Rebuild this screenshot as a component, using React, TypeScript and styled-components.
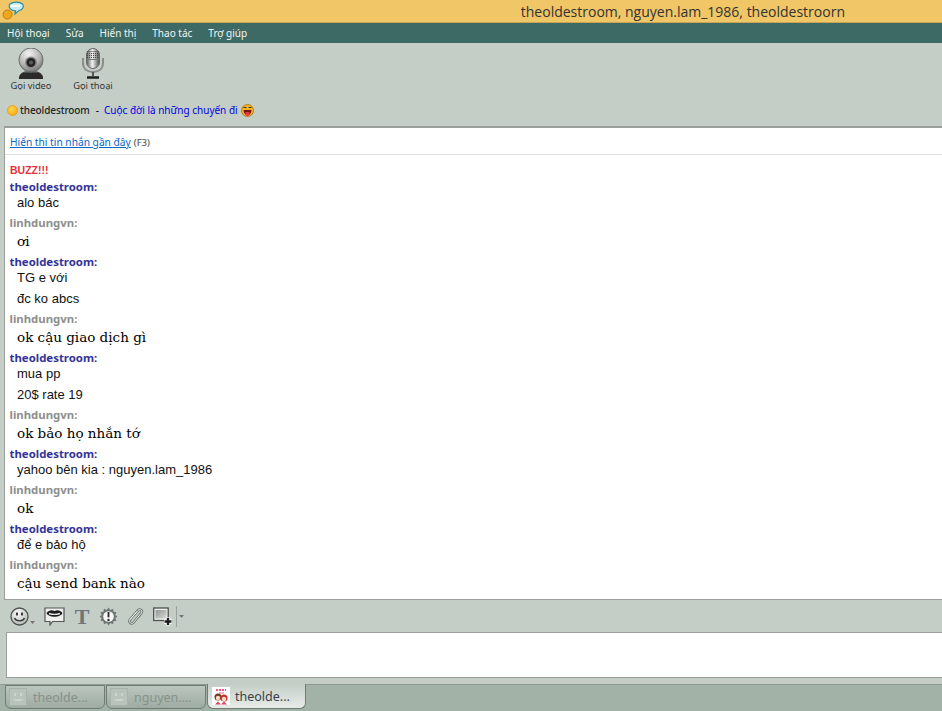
import React from "react";
import styled, { createGlobalStyle } from "styled-components";

const Global = createGlobalStyle`
  html, body { margin: 0; padding: 0; width: 942px; height: 711px; overflow: hidden; background: #c4cec7; }
  * { box-sizing: border-box; }
`;
const Page = styled.div`width:942px;height:711px;display:flex;flex-direction:column;background:#c4cec7;overflow:hidden;font-family:"Liberation Sans",sans-serif;`;
const TitleBar = styled.div`height:23px;flex:none;background:#f0c666;border-bottom:1px solid #c9a558;display:flex;align-items:center;justify-content:space-between;padding:0 97px 0 2px;`;
const TitleText = styled.div`font:14px "Open Sans",sans-serif;color:#333;white-space:nowrap;`;
const MenuBar = styled.div`height:20px;flex:none;background:#3e6a66;display:flex;align-items:center;gap:16px;padding-left:7px;`;
const MenuItem = styled.span`font:10px "Noto Sans",sans-serif;color:#f2f5f4;`;
const TopTools = styled.div`height:49px;flex:none;display:flex;padding:5px 0 0 11px;gap:22px;`;
const CallButton = styled.div`width:40px;display:flex;flex-direction:column;align-items:center;font:9.3px/14px "Noto Sans",sans-serif;color:#333;white-space:nowrap;`;
const StatusRow = styled.div`height:34px;flex:none;display:flex;align-items:center;padding:2px 0 0 7px;font:10px "Noto Sans",sans-serif;`;
const Contact = styled.span`margin:0 6px 0 2px;color:#222;font-weight:500;letter-spacing:-.1px;`;
const Mood = styled.span`color:#0000e0;margin:0 3px 0 5px;`;
const ChatPanel = styled.div`height:474px;flex:none;margin-left:4px;background:#fff;border-top:2px solid #9a9f9c;border-left:1px solid #9a9f9c;border-bottom:1px solid #9a9f9c;overflow:hidden;`;
const HistoryRow = styled.div`height:27px;border-bottom:1px solid #dedede;display:flex;align-items:center;padding:2px 0 0 5px;font:9.6px "Noto Sans",sans-serif;color:#444;gap:3px;`;
const HistoryLink = styled.a`color:#0a66c2;text-decoration:underline;font-size:10.2px;`;
const Log = styled.div`padding:8px 0 0 4.500px;display:flex;flex-direction:column;`;
const Buzz = styled.div`font:bold 10.5px/14px "Liberation Sans",sans-serif;color:#e8303a;height:14px;margin-left:.5px;`;
const Name = styled.div<{ $me?: boolean; $gap: number }>`font:bold 11.4px/14px "Noto Sans",sans-serif;height:14px;margin-top:${p => p.$gap}px;color:${p => (p.$me ? "#333399" : "#8e8e8e")};`;
const Plain = styled.div<{ $gap?: number }>`font:13px/18px "Liberation Sans",sans-serif;height:16px;color:#111;margin:${p => p.$gap ?? 0}px 0 0 7.500px;`;
const Rich = styled.div`font:13.5px/22px "DejaVu Serif",serif;height:20px;color:#000;margin-left:7.500px;`;
const EditTools = styled.div`height:32px;flex:none;display:flex;align-items:center;gap:9px;padding:1px 0 0 10px;`;
const Input = styled.div`height:46px;flex:none;margin-left:6px;background:#fff;border:1px solid #9a9f9c;border-right:none;`;
const TabBar = styled.div`flex:1;margin-top:6px;display:flex;align-items:flex-start;background:#a2b2a7;border-top:1px solid #8d9a91;padding-left:5px;`;
const Tab = styled.div<{ $active?: boolean }>`width:${p => (p.$active ? 99 : 100)}px;height:${p => (p.$active ? 25 : 24)}px;margin-right:${p => (p.$active ? 0 : 1)}px;margin-top:${p => (p.$active ? -1 : 0)}px;border:1px solid #6f7c74;border-top:${p => (p.$active ? "none" : "1px solid #6f7c74")};border-radius:0 0 6px 6px;background:${p => (p.$active ? "linear-gradient(#c4cec7,#e8ece9)" : "linear-gradient(#bac6be,#9eaba2)")};display:flex;align-items:center;gap:${p => (p.$active ? 5 : 6)}px;padding-left:${p => (p.$active ? 4 : 3)}px;font:12.500px "Noto Sans",sans-serif;color:${p => (p.$active ? "#3a3f4a" : "#87918b")};`;

const ToolSvg = styled.svg`display:block;flex:none;`;

const Logo = () => (
  <ToolSvg width="22" height="20" viewBox="0 0 22 20">
    <circle cx="5.500" cy="13.500" r="4.500" fill="#f0a818" stroke="#c2761a" />
    <path d="M8 3C11 .5 18 .5 20.500 3c2 2.500 0 6-3.500 6.500L13 13l.5-3.200C9 9.500 5.500 6.500 8 3z" fill="#c7eef2" stroke="#2f8da2" strokeWidth="1.200" />
    <path d="M9 5h9" stroke="#fff" strokeWidth="2" />
  </ToolSvg>
);
const Webcam = () => (
  <ToolSvg width="26" height="31" viewBox="0 0 26 31">
    <defs>
      <radialGradient id="cam" cx=".4" cy=".25" r=".85"><stop offset="0" stopColor="#f2f2f2" /><stop offset=".6" stopColor="#b0b0b0" /><stop offset="1" stopColor="#5e5e5e" /></radialGradient>
    </defs>
    <path d="M1 29c1-4 5-6 12-6s11 2 12 6v2H1z" fill="#2b2b2b" />
    <path d="M6 24h14" stroke="#777" strokeWidth="1" />
    <circle cx="13" cy="12" r="12" fill="url(#cam)" stroke="#6c6c6c" />
    <circle cx="13" cy="14.500" r="6" fill="#8a8a8a" />
    <circle cx="13" cy="14.500" r="4.500" fill="#242424" />
    <circle cx="13" cy="14.500" r="2" fill="#5b5b5b" />
  </ToolSvg>
);
const Mic = () => (
  <ToolSvg width="24" height="31" viewBox="0 0 24 31">
    <defs>
      <linearGradient id="mic" x1="0" x2="1"><stop offset="0" stopColor="#5a5a5a" /><stop offset=".45" stopColor="#f2f2f2" /><stop offset="1" stopColor="#4c4c4c" /></linearGradient>
    </defs>
    <path d="M2 10v5c0 6 4.500 9 10 9s10-3 10-9v-5" fill="none" stroke="#8c8c8c" strokeWidth="2" />
    <rect x="5.500" y=".5" width="13" height="20" rx="6.500" fill="url(#mic)" stroke="#666" />
    <path d="M6.500 3.500h11M6 5.500h12M6 7.500h12M6 9.500h12" stroke="#444" strokeWidth="1" strokeDasharray="1 1" />
    <path d="M5.500 11.500h13" stroke="#777" />
    <path d="M12 24v4" stroke="#555" strokeWidth="2" />
    <path d="M6 29.500h12" stroke="#1c1c1c" strokeWidth="2.500" />
  </ToolSvg>
);
const Dot = () => (
  <ToolSvg width="11" height="11" viewBox="0 0 11 11">
    <defs><radialGradient id="dot" cx=".4" cy=".35" r=".7"><stop offset="0" stopColor="#ffd84d" /><stop offset="1" stopColor="#f8a70c" /></radialGradient></defs>
    <circle cx="5.500" cy="5.500" r="5" fill="url(#dot)" stroke="#e6a030" />
  </ToolSvg>
);
const Tongue = () => (
  <ToolSvg width="13" height="13" viewBox="0 0 13 13">
    <circle cx="6.500" cy="6.500" r="6" fill="#f7b421" stroke="#a86a10" strokeWidth=".8" />
    <path d="M2.500 3.500h3M7.500 3.500h3" stroke="#333" />
    <path d="M2.500 6h8c0 3-2 5-4 5s-4-2-4-5z" fill="#7c1010" />
    <path d="M4.500 8h4v2a2 2 0 01-4 0z" fill="#e8364a" />
  </ToolSvg>
);
const Smile = () => (
  <ToolSvg width="19" height="19" viewBox="0 0 19 19">
    <defs><radialGradient id="sm" cx=".4" cy=".3" r=".8"><stop offset="0" stopColor="#fafafa" /><stop offset="1" stopColor="#aeb3b0" /></radialGradient></defs>
    <circle cx="9.500" cy="9.500" r="8.500" fill="url(#sm)" stroke="#4e5250" strokeWidth="1.300" />
    <ellipse cx="7" cy="7" rx="1.100" ry="1.800" fill="#333" />
    <ellipse cx="12" cy="7" rx="1.100" ry="1.800" fill="#333" />
    <path d="M4.500 11c1.500 3.800 8.500 3.800 10 0" fill="none" stroke="#333" strokeWidth="1.300" />
  </ToolSvg>
);
const Caret = () => (
  <ToolSvg width="5" height="3" viewBox="0 0 5 3"><path d="M0 0h5L2.500 3z" fill="#777" /></ToolSvg>
);
const Lips = () => (
  <ToolSvg width="21" height="19" viewBox="0 0 21 19">
    <path d="M1 1h19v13.500H8.500L6 18v-3.500H1z" fill="#eef0ee" stroke="#555" strokeWidth="1.200" />
    <path d="M2.500 6C5 2.800 8 2.800 10.500 4 13 2.800 16 2.800 18.500 6c-2 5-14 5-16 0z" fill="#1c1c1c" />
    <path d="M5 6.500c3 1 8 1 11 0" stroke="#e8e8e8" strokeWidth="1.400" fill="none" />
  </ToolSvg>
);
const Gear = () => (
  <ToolSvg width="19" height="19" viewBox="0 0 19 19">
    <path d="M9.500 .5l1.800 2.500 2.800-1.200.4 3 3 .4-1.200 2.800L18.500 9.500l-2.200 1.500 1.200 2.800-3 .4-.4 3-2.800-1.200-1.800 2.500-1.800-2.500-2.800 1.200-.4-3-3-.4 1.200-2.800L.5 9.500l2.200-1.500-1.200-2.800 3-.4.4-3 2.800 1.200z" fill="#6f7673" />
    <circle cx="9.500" cy="9.500" r="5.300" fill="#f6f7f6" />
    <path d="M9.500 5v5.300" stroke="#2c2c2c" strokeWidth="1.900" />
    <circle cx="9.500" cy="12.900" r="1.200" fill="#2c2c2c" />
  </ToolSvg>
);
const Clip = () => (
  <ToolSvg width="17" height="19" viewBox="0 0 17 19">
    <path d="M3 12.500L11 3.500c2.200-2.300 5 .2 3.300 2.600L6.500 15.500c-1.800 2.200-5.200-.2-3.500-2.800L9.500 5" fill="none" stroke="#6e7673" strokeWidth="2.600" strokeLinecap="round" />
    <path d="M3 12.500L11 3.500c2.200-2.300 5 .2 3.300 2.600L6.500 15.500c-1.800 2.200-5.200-.2-3.500-2.800L9.500 5" fill="none" stroke="#eef0ee" strokeWidth="1" strokeLinecap="round" />
  </ToolSvg>
);
const Picture = () => (
  <ToolSvg width="19" height="19" viewBox="0 0 19 19">
    <defs><linearGradient id="pic" x1="0" y1="0" x2="1" y2="1"><stop offset="0" stopColor="#8f9592" /><stop offset="1" stopColor="#d8dcd9" /></linearGradient></defs>
    <rect x=".7" y="1" width="14.500" height="12.500" fill="#eef0ee" stroke="#4d504e" strokeWidth="1.300" />
    <rect x="2.500" y="3" width="11" height="8.500" fill="url(#pic)" />
    <path d="M11 14.500h8M15 10.500v8" stroke="#fff" strokeWidth="4.500" />
    <path d="M11.500 14.500h7M15 11v7" stroke="#1c1c1c" strokeWidth="2.400" />
  </ToolSvg>
);
const Ghost = () => (
  <ToolSvg width="18" height="18" viewBox="0 0 18 18">
    <rect x=".5" y=".5" width="17" height="17" fill="#b8c3bb" stroke="#a8b3ab" />
    <rect x="5" y="5" width="2" height="3" fill="#cdd5cf" />
    <rect x="11" y="5" width="2" height="3" fill="#cdd5cf" />
    <path d="M4 11c2 3 8 3 10 0z" fill="#cdd5cf" />
  </ToolSvg>
);
const Avatar = () => (
  <ToolSvg width="18" height="18" viewBox="0 0 18 18">
    <rect width="18" height="18" fill="#fff" />
    <path d="M4 3h10" stroke="#f0588c" strokeWidth="2" strokeDasharray="2 1" />
    <path d="M7 6h5" stroke="#f49ab8" strokeWidth="1.500" />
    <circle cx="6" cy="10" r="3.500" fill="#6e3a22" />
    <circle cx="12" cy="11" r="3.500" fill="#c83030" />
    <circle cx="6" cy="11" r="2.200" fill="#fcd9c0" />
    <circle cx="12" cy="12" r="2.200" fill="#fcd9c0" />
    <path d="M3 17.500l3-3 3 3zM9 17.500l3-3 3 3z" fill="#d8405c" />
  </ToolSvg>
);
const T = styled.span`font:bold 22px/20px "Liberation Serif",serif;color:#6e7478;width:16px;text-align:center;`;
const Divider = styled.span`width:1px;height:21px;background:#9aa39d;margin-left:-5px;`;
const CaretSlot = styled.span`display:flex;margin:12px 0 0 -8px;`;
const Caret2 = styled.span`display:flex;margin-left:-7px;`;

type Line = { who: string; me: boolean; gap: number; plain?: string[]; rich?: string };
const lines: Line[] = [
  { who: "theoldestroom", me: true, gap: 3, plain: ["alo bác"] },
  { who: "linhdungvn", me: false, gap: 6, rich: "ơi" },
  { who: "theoldestroom", me: true, gap: 5, plain: ["TG e với", "đc ko abcs"] },
  { who: "linhdungvn", me: false, gap: 6, rich: "ok cậu giao dịch gì" },
  { who: "theoldestroom", me: true, gap: 5, plain: ["mua pp", "20$ rate 19"] },
  { who: "linhdungvn", me: false, gap: 6, rich: "ok bảo họ nhắn tớ" },
  { who: "theoldestroom", me: true, gap: 5, plain: ["yahoo bên kia : nguyen.lam_1986"] },
  { who: "linhdungvn", me: false, gap: 6, rich: "ok" },
  { who: "theoldestroom", me: true, gap: 5, plain: ["để e bảo hộ"] },
  { who: "linhdungvn", me: false, gap: 6, rich: "cậu send bank nào" },
];

export default function App() {
  return (
    <Page>
      <Global />
      <TitleBar>
        <Logo />
        <TitleText>theoldestroom, nguyen.lam_1986, theoldestroorn</TitleText>
      </TitleBar>
      <MenuBar>
        {["Hội thoại", "Sửa", "Hiển thị", "Thao tác", "Trợ giúp"].map(m => (
          <MenuItem key={m}>{m}</MenuItem>
        ))}
      </MenuBar>
      <TopTools>
        <CallButton><Webcam />Gọi video</CallButton>
        <CallButton><Mic />Gọi thoại</CallButton>
      </TopTools>
      <StatusRow>
        <Dot />
        <Contact>theoldestroom</Contact>-
        <Mood>Cuộc đời là những chuyến đi</Mood>
        <Tongue />
      </StatusRow>
      <ChatPanel>
        <HistoryRow>
          <HistoryLink>Hiển thi tin nhắn gần đây</HistoryLink>(F3)
        </HistoryRow>
        <Log>
          <Buzz>BUZZ!!!</Buzz>
          {lines.map((l, i) => (
            <React.Fragment key={i}>
              <Name $me={l.me} $gap={l.gap}>{l.who}:</Name>
              {l.plain?.map((t, j) => <Plain key={t} $gap={j ? 5 : 0}>{t}</Plain>)}
              {l.rich && <Rich>{l.rich}</Rich>}
            </React.Fragment>
          ))}
        </Log>
      </ChatPanel>
      <EditTools>
        <Smile /><CaretSlot><Caret /></CaretSlot>
        <Lips /><T>T</T><Gear /><Clip /><Picture /><Divider /><Caret2><Caret /></Caret2>
      </EditTools>
      <Input />
      <TabBar>
        <Tab><Ghost />theolde...</Tab>
        <Tab><Ghost />nguyen....</Tab>
        <Tab $active><Avatar />theolde...</Tab>
      </TabBar>
    </Page>
  );
}
